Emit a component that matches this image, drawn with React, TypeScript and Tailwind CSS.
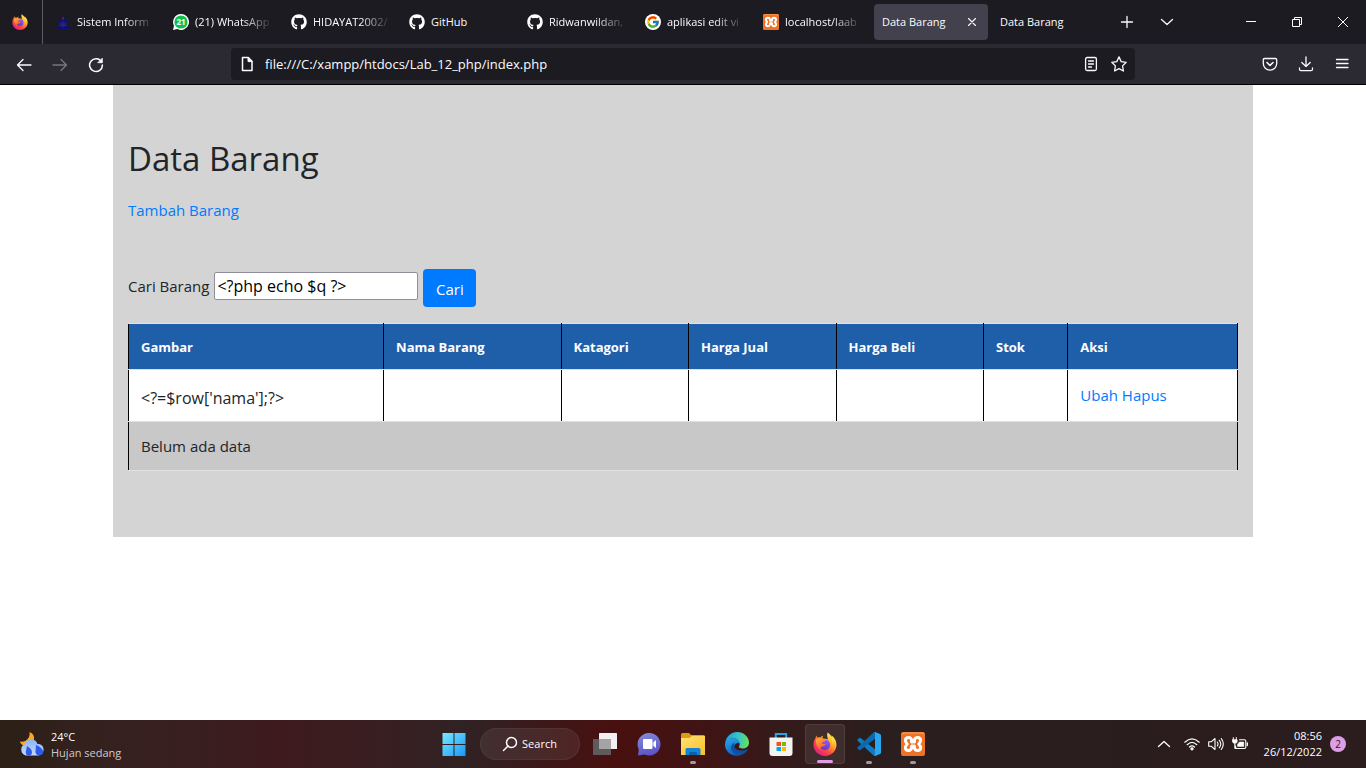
import { useId, type ReactNode } from "react";
import { FaGithub } from "react-icons/fa";
import { FcGoogle } from "react-icons/fc";

function FirefoxIcon({ className }: { className: string }) {
  const id = useId();
  return (
    <svg viewBox="0 0 24 24" className={className} aria-hidden="true">
      <defs>
        <linearGradient id={id + "a"} x1="0.85" y1="0.1" x2="0.2" y2="0.95">
          <stop offset="0" stopColor="#fff44f" />
          <stop offset="0.35" stopColor="#ffa52b" />
          <stop offset="0.65" stopColor="#ff4b3e" />
          <stop offset="1" stopColor="#e5178b" />
        </linearGradient>
        <linearGradient id={id + "b"} x1="0.6" y1="0" x2="0.3" y2="1">
          <stop offset="0" stopColor="#9059ff" />
          <stop offset="1" stopColor="#5b3bc4" />
        </linearGradient>
        <linearGradient id={id + "c"} x1="0" y1="0" x2="0.6" y2="1">
          <stop offset="0" stopColor="#ffb22e" />
          <stop offset="1" stopColor="#ff5a34" />
        </linearGradient>
      </defs>
      <path
        fill={`url(#${id}a)`}
        d="M14.6.4c2 1.300 3.300 2.900 4 4.700.1-.7.100-1.300-.1-1.900 3.100 2.300 5 5.800 5 9.600C23.500 19 18.400 24 12 24S.5 19 .5 12.800c0-2.500.7-4.800 2-6.700.1-.9.500-1.900 1.100-2.600.1.900.4 1.500.8 2 1-.3 2-.3 3 0 .7-.9 1.700-1.500 2.800-1.700-.6.800-.9 1.600-.9 2.400l5.700 1c-.8-2.200-1.300-4.600-.4-6.800Z"
      />
      <circle cx="12" cy="12.800" r="5.200" fill={`url(#${id}b)`} />
      <path
        fill={`url(#${id}c)`}
        d="M3 7.400c1.400-1.200 3-1.500 4.600-.9 1.500.8 3.200 1 5.200.9.5 1-.5 1.900-2.600 2.500-.9.300-.6 1.200-1.700 1.900 1.900-.3 3 .3 4.500.1-.8 1.900-2.500 2-3.900 2.500-2 .8-2.300 2.300-1.300 3.500C4.800 17.600 2.300 11 3 7.400Z"
      />
      <path
        fill="#ffd83d"
        d="M14.800 1.400c2.800 2.200 3.800 4.800 4.100 7 1 1.700 1 3.700.3 5.700 1.800-3.100 1.500-6.500-.6-9-.8-1.500-2.100-2.800-3.800-3.700Z"
      />
    </svg>
  );
}

function XamppIcon({ className }: { className: string }) {
  return (
    <svg viewBox="0 0 24 24" className={className} aria-hidden="true">
      <rect width="24" height="24" rx="2" fill="#ee7326" />
      <path d="M1 2.500Q1 1 3 1h18q2 0 2 1.500" stroke="#f9a66c" fill="none" />
      <path
        fill="none"
        stroke="#fff"
        strokeWidth="3"
        strokeLinejoin="round"
        d="M7.600 5.500c-1.900 0-3.200 1.200-3.200 3 0 1.500 1 2.500 1.800 3.500-.8 1-1.800 2-1.800 3.500 0 1.800 1.300 3 3.200 3 1.800 0 2.600-1 3-2.600V14h2.800v1.900c.4 1.600 1.200 2.600 3 2.600 1.900 0 3.200-1.200 3.200-3 0-1.500-1-2.500-1.800-3.500.8-1 1.800-2 1.800-3.500 0-1.800-1.300-3-3.200-3-1.800 0-2.600 1-3 2.600V10h-2.800V8.100c-.4-1.600-1.200-2.600-3-2.600Z"
      />
    </svg>
  );
}

function CampusIcon() {
  return (
    <svg viewBox="0 0 16 16" className="size-4 shrink-0" aria-hidden="true">
      <path d="M3 3.500Q8-1 13 3.500l1 6H2Z" fill="#17173a" />
      <path d="M1.500 11h13l-.5 4H2ZM5 6l2-1h2l2 1-.5 4h-5Z" fill="#11106e" />
      <path d="M4 11.500h8M8 7v7M4.500 8.500l7 3M11.500 8.500l-7 3" stroke="#24249a" />
      <path d="M7.300 5.500Q6.800 4 8.200 2.500q1.200 1.700.3 3Z" fill="#a51e2a" />
    </svg>
  );
}

function WhatsAppIcon() {
  return (
    <svg viewBox="0 0 16 16" className="size-4 shrink-0" aria-hidden="true">
      <path d="M8 0a8 8 0 1 1-3.700 15.100L0 16l1-4.200A8 8 0 0 1 8 0Z" fill="#fff" />
      <circle cx="8" cy="8" r="6.600" fill="#12bf4c" />
      <text x="8" y="10.800" textAnchor="middle" fontSize="8" fontWeight="700" fill="#fff">
        21
      </text>
    </svg>
  );
}

function EdgeIcon() {
  return (
    <svg viewBox="0 0 24 24" className="size-6" aria-hidden="true">
      <defs>
        <linearGradient id="edge-top" x1="0" y1="0.4" x2="1" y2="0.5">
          <stop offset="0" stopColor="#1c9de0" />
          <stop offset="0.5" stopColor="#35c1cf" />
          <stop offset="1" stopColor="#66e05c" />
        </linearGradient>
        <linearGradient id="edge-side" x1="0" y1="0" x2="0.4" y2="1">
          <stop offset="0" stopColor="#2ba9ea" />
          <stop offset="1" stopColor="#0a62c4" />
        </linearGradient>
      </defs>
      <path
        fill="url(#edge-side)"
        d="M0 12.500C0 8 4.500 6 9 6.300c4 .3 6.500 3 6.300 5.700-2-2-6-.5-6.200 3-.1 4 3.500 7 7.400 7.800C9 26-.1 21 0 12.500Z"
      />
      <path
        fill="#124f9f"
        d="M9.300 10.700C6 12 5.200 16 7 19c2 3.600 6.500 5.200 10.500 3.500 2.400-1 4-2.500 5.200-4.400.3-.6-.2-1-.8-.7C17 19.800 9.700 18.500 9.100 14c-.2-1.400 0-2.500.2-3.300Z"
      />
      <path
        fill="url(#edge-top)"
        d="M.2 10.500C1.300 4.300 6.300 0 12 0c6.800 0 12 4.900 12 10.400 0 4-3 6-6.500 6-2.700 0-4.100-.9-3.500-1.900C16.300 10.900 13.500 6.300 8.600 6.200 4.900 6.200 1.500 8 .2 10.500Z"
      />
    </svg>
  );
}

function VsCodeIcon() {
  return (
    <svg viewBox="0 0 24 24" className="size-6" aria-hidden="true">
      <path d="M.6 7.400 2.200 6q.6-.5 1.300 0L19 18v5.800q-1.300.300-2.400-.4L.6 8.800q-.6-.7 0-1.400Z" fill="#0f7cc4" />
      <path d="M.6 16.600 2.200 18q.6.500 1.300 0L19 6V.2q-1.300-.3-2.400.4L.6 15.200q-.6.700 0 1.400Z" fill="#0a69af" />
      <path d="M17 23.700q1 .300 1.800 0L23 22q1-.5 1-1.500V3.500Q24 2.500 23 2L18.800.2Q18 0 17 .4q1 .3 1 1.600v20q0 1.300-1 1.700Z" fill="#28a6f0" />
    </svg>
  );
}

function WindowsIcon() {
  return (
    <svg viewBox="0 0 24 24" className="size-6" aria-hidden="true">
      <defs>
        <linearGradient id="win" x1="0" y1="0" x2="24" y2="24" gradientUnits="userSpaceOnUse">
          <stop offset="0" stopColor="#7cecff" />
          <stop offset="1" stopColor="#1597fb" />
        </linearGradient>
      </defs>
      <path d="M.5 1h11v11H.5ZM12.500 1h11v11h-11ZM.5 13h11v11H.5ZM12.500 13h11v11h-11Z" fill="url(#win)" />
    </svg>
  );
}

function TaskViewIcon() {
  return (
    <svg viewBox="0 0 24 24" className="size-6" aria-hidden="true">
      <rect x="6" y="1" width="18" height="16" rx="0.500" fill="#f1f1f1" />
      <rect x="0" y="7" width="18" height="16" rx="0.500" fill="#5d5b5b" />
      <rect x="6" y="7" width="12" height="10" fill="#a4a4a4" />
    </svg>
  );
}

function ChatIcon() {
  return (
    <svg viewBox="0 0 24 24" className="size-6" aria-hidden="true">
      <defs>
        <linearGradient id="chat" x1="0.300" y1="0" x2="0.600" y2="1">
          <stop offset="0" stopColor="#7f8ad6" />
          <stop offset="1" stopColor="#5b50c9" />
        </linearGradient>
      </defs>
      <path d="M12 1a11.300 11.300 0 1 1-4.500 21.600L1 23.500l.8-6A11.300 11.300 0 0 1 12 1Z" fill="url(#chat)" />
      <rect x="6" y="7" width="9.500" height="10" rx="1" fill="#fff" />
      <path d="m16.300 10.300 2.700-2.300v8l-2.700-2.300Z" fill="#fff" />
    </svg>
  );
}

function ExplorerIcon() {
  return (
    <svg viewBox="0 0 24 24" className="size-6" aria-hidden="true">
      <defs>
        <linearGradient id="folder" x1="0" y1="0" x2="1" y2="1">
          <stop offset="0" stopColor="#ffe173" />
          <stop offset="1" stopColor="#fabf2a" />
        </linearGradient>
      </defs>
      <path d="M0 2.500Q0 1 1.500 1H8l2 2h12.500Q24 3 24 4.500V9H0Z" fill="#dc9b10" />
      <path d="M0 6h8.500L11 4h13v19H0Z" fill="url(#folder)" />
      <path d="M4.500 23v-5.500Q4.500 16 6 16h12q1.500 0 1.500 1.500V23Z" fill="#1583d3" />
      <path d="M8 23v-2q0-1 1-1h6q1 0 1 1v2Z" fill="#0c60a8" />
    </svg>
  );
}

function StoreIcon() {
  return (
    <svg viewBox="0 0 24 24" className="size-6" aria-hidden="true">
      <path d="M6.800 7V2h10.400v5" stroke="#27a6e5" strokeWidth="2" fill="none" />
      <path d="M.5 5.500h23V21q0 3-3 3h-17q-3 0-3-3Z" fill="#f3f3f3" />
      <path d="M7.500 10H12v4H7.500Z" fill="#f25022" />
      <path d="M13 10h4v4h-4Z" fill="#7fba00" />
      <path d="M7.500 15H12v4H7.500Z" fill="#00a4ef" />
      <path d="M13 15h4v4h-4Z" fill="#ffb900" />
    </svg>
  );
}

function WeatherIcon() {
  return (
    <svg viewBox="0 0 24 24" className="size-6" aria-hidden="true">
      <defs>
        <linearGradient id="cloud" x1="0" y1="0" x2="0" y2="1">
          <stop offset="0" stopColor="#89b4f5" />
          <stop offset="1" stopColor="#c5dbfa" />
        </linearGradient>
      </defs>
      <path d="M9.500 0c4 1.500 5.500 5 4 9L5 14C2 13 .5 11.500 0 9.500 6 10.500 10.500 6 9.500 0Z" fill="#f9a825" />
      <path d="M6 23.500a6 6 0 0 1-.8-11.500C6 5.800 16 5.600 17.500 12c8-.5 8 11 .5 11.500Z" fill="url(#cloud)" />
      <path d="M7 14c5 3 6 6 4 9-4 2-6-1-5-4Zm9-1c6 2.500 8.500 6 6.500 9-4 3-7.500.5-7-3Z" fill="#2e5be8" />
    </svg>
  );
}

function Line({ children }: { children: ReactNode }) {
  return (
    <svg
      viewBox="0 0 16 16"
      className="size-4"
      fill="none"
      stroke="currentColor"
      strokeWidth="1.300"
      strokeLinecap="round"
      strokeLinejoin="round"
      aria-hidden="true"
    >
      {children}
    </svg>
  );
}

const github = <FaGithub className="size-4 shrink-0 text-white" />;

const tabs: { title: string; icon?: ReactNode; active?: boolean }[] = [
  { title: "Sistem Inform", icon: <CampusIcon /> },
  { title: "(21) WhatsApp", icon: <WhatsAppIcon /> },
  { title: "HIDAYAT2002/", icon: github },
  { title: "GitHub", icon: github },
  { title: "Ridwanwildan,", icon: github },
  { title: "aplikasi edit vi", icon: <FcGoogle className="size-4 shrink-0 rounded-full bg-white p-px" /> },
  { title: "localhost/laab", icon: <XamppIcon className="size-4 shrink-0" /> },
  { title: "Data Barang", active: true },
  { title: "Data Barang" },
];

function TabStrip() {
  return (
    <div className="flex h-11 bg-[#1c1b22] text-[#fbfbfe]">
      <button aria-label="Firefox View" className="grid w-[43px] shrink-0 place-items-center border-r border-[#5b5b62] pr-0.5">
        <FirefoxIcon className="size-4" />
      </button>
      <div className="ml-[5px] flex min-w-0 items-center gap-1">
        {tabs.map((tab, i) => (
          <div
            key={i}
            className={
              "flex h-9 w-[114px] min-w-0 items-center gap-1.5 rounded " +
              (tab.active ? "bg-[#42414d] px-2" : tab.icon ? "px-[7px]" : "px-2")
            }
          >
            {tab.icon}
            <button
              className={
                "min-w-0 flex-1 text-left text-[11px] whitespace-nowrap " +
                (tab.icon && tab.title !== "GitHub"
                  ? "[mask-image:linear-gradient(to_right,black_60%,transparent)]"
                  : "")
              }
            >
              {tab.title}
            </button>
            {tab.active && (
              <button aria-label="Close tab">
                <Line>
                  <path d="m4.500 4.500 7 7M11.500 4.500l-7 7" strokeWidth="1.100" />
                </Line>
              </button>
            )}
          </div>
        ))}
      </div>
      <button aria-label="New tab" className="ml-[5px] grid w-8 place-items-center">
        <Line>
          <path d="M8 2.500v11M2.500 8h11" />
        </Line>
      </button>
      <button aria-label="List all tabs" className="ml-2 grid w-8 place-items-center">
        <Line>
          <path d="m2.500 5.500 5.500 5 5.500-5" />
        </Line>
      </button>
      <div className="ml-auto flex">
        <button aria-label="Minimize" className="grid w-[46px] place-items-center">
          <svg viewBox="0 0 10 10" className="size-2.5" stroke="#fff" fill="none">
            <path d="M0 4.500h10" />
          </svg>
        </button>
        <button aria-label="Restore" className="grid w-[46px] place-items-center">
          <svg viewBox="0 0 10 10" className="size-2.5" stroke="#fff" fill="none">
            <path d="M.5 2.500h7v7h-7ZM2.500 2.500v-2h7v7h-2" />
          </svg>
        </button>
        <button aria-label="Close" className="grid w-[46px] place-items-center">
          <svg viewBox="0 0 10 10" className="size-2.5" stroke="#fff" fill="none">
            <path d="m0 0 10 10M10 0 0 10" />
          </svg>
        </button>
      </div>
    </div>
  );
}

function NavBar() {
  return (
    <div className="flex h-[41px] items-start border-b border-black bg-[#2b2a33] pt-1 text-[#fbfbfe]">
      <div className="flex h-8 min-w-0 flex-1 items-center gap-5 pt-0.5 pl-4">
        <button aria-label="Back">
          <Line>
            <path d="M15 8H1.500M7 2.500 1.500 8 7 13.500" />
          </Line>
        </button>
        <button aria-label="Forward" className="text-[#77767d]">
          <Line>
            <path d="M1 8h13.500M9 2.500 14.500 8 9 13.500" />
          </Line>
        </button>
        <button aria-label="Reload">
          <Line>
            <path d="M13.600 5A6.400 6.400 0 1 0 14.400 8" strokeWidth="1.500" />
            <path d="M14.300 1.500v4.200h-4.200Z" fill="currentColor" strokeWidth="0.800" />
          </Line>
        </button>
      </div>
      <div className="flex h-8 w-[904px] items-center rounded bg-[#1c1b22] px-2">
        <Line>
          <path d="M3.500 1.600h5.800l3.700 3.700v9.100H3.500Z" strokeWidth="1.500" />
          <path d="M9 1.600v4h4Z" fill="currentColor" strokeWidth="1" />
        </Line>
        <input
          aria-label="Address"
          defaultValue="file:///C:/xampp/htdocs/Lab_12_php/index.php"
          className="ml-2.5 min-w-0 flex-1 bg-transparent pt-0.5 text-[13px] outline-none"
        />
        <button aria-label="Reader view" className="mr-3">
          <Line>
            <rect x="2.600" y="1.500" width="10.800" height="13" rx="1.500" />
            <path d="M5.500 5h5M5.500 8h5M5.500 11h3" />
          </Line>
        </button>
        <button aria-label="Bookmark this page">
          <Line>
            <path d="m8 .9 2.200 4.700 5 .7-3.600 3.600.8 5.100L8 12.600 3.600 15l.8-5.100L.8 6.300l5-.7Z" />
          </Line>
        </button>
      </div>
      <div className="flex h-8 min-w-0 flex-1 items-center justify-end gap-5 pr-4">
        <button aria-label="Save to Pocket">
          <Line>
            <path d="M2.500 2.500h11q1.200 0 1.200 1.200V7.500a6.700 6.700 0 0 1-13.400 0V3.700q0-1.200 1.200-1.200Z" />
            <path d="m5 6.500 3 3 3-3" strokeWidth="1.600" />
          </Line>
        </button>
        <button aria-label="Downloads">
          <Line>
            <path d="M8 .8V10.500M3.800 6.500 8 10.500l4.200-4M1.500 12v1.200q0 1.500 1.500 1.500h10q1.500 0 1.500-1.500V12" />
          </Line>
        </button>
        <button aria-label="Menu">
          <Line>
            <path d="M2.500 3.500h11.500M2.500 7.500h11.500M2.500 11.500h11.500" />
          </Line>
        </button>
      </div>
    </div>
  );
}

const columns = [
  { label: "Gambar", width: "w-[23%]" },
  { label: "Nama Barang", width: "w-[16%]" },
  { label: "Katagori", width: "w-[11.5%]" },
  { label: "Harga Jual", width: "w-[13.3%]" },
  { label: "Harga Beli", width: "w-[13.3%]" },
  { label: "Stok", width: "w-[7.6%]" },
  { label: "Aksi", width: "w-[15.3%]" },
];

const cell = "border-x border-y border-x-black border-y-[#dee2e6] px-3 text-left";

function Page() {
  return (
    <main className="flex-1 bg-white text-[15px] text-[#212529]">
      <div className="mx-auto max-w-[1140px] bg-[#d4d4d4] px-[15px] pt-[52px] pb-[66px]">
        <h1 className="text-[33px] leading-[43px]">Data Barang</h1>
        <p className="mt-[18px] leading-6">
          <a href="#tambah" className="text-[#007bff]">
            Tambah Barang
          </a>
        </p>
        <form className="mt-[47px] flex items-start" onSubmit={(e) => e.preventDefault()}>
          <label htmlFor="q" className="mt-[5px] leading-6">
            Cari Barang
          </label>
          <input
            id="q"
            type="text"
            defaultValue="<?php echo $q ?>"
            className="mt-[3px] ml-[5px] h-7 w-[204px] rounded-xs border border-[#8f8f9d] bg-white px-0.5 text-base text-black"
          />
          <button type="submit" className="ml-[5px] h-[38px] w-[53px] rounded bg-[#007bff] pt-0.5 text-white">
            Cari
          </button>
        </form>
        <table className="mt-4 w-full table-fixed border-collapse">
          <thead>
            <tr className="h-[46px] bg-[#1f5faa] text-[13px] text-white">
              {columns.map((c) => (
                <th key={c.label} className={cell + " pt-0.5 font-bold " + c.width}>
                  {c.label}
                </th>
              ))}
            </tr>
          </thead>
          <tbody>
            <tr className="h-[52px] bg-white">
              <td className={cell + " pt-1 text-base"}>{"<?=$row['nama'];?>"}</td>
              <td className={cell} />
              <td className={cell} />
              <td className={cell} />
              <td className={cell} />
              <td className={cell} />
              <td className={cell + " text-[#007bff]"}>
                <a href="#ubah">Ubah</a> <a href="#hapus">Hapus</a>
              </td>
            </tr>
            <tr className="h-[49px] bg-[#c8c8c8]">
              <td colSpan={7} className={cell}>
                Belum ada data
              </td>
            </tr>
          </tbody>
        </table>
      </div>
    </main>
  );
}

const apps: { name: string; icon: ReactNode; running?: boolean; active?: boolean }[] = [
  { name: "Task View", icon: <TaskViewIcon /> },
  { name: "Chat", icon: <ChatIcon /> },
  { name: "File Explorer", icon: <ExplorerIcon />, running: true },
  { name: "Microsoft Edge", icon: <EdgeIcon /> },
  { name: "Microsoft Store", icon: <StoreIcon /> },
  { name: "Firefox", icon: <FirefoxIcon className="size-6" />, active: true },
  { name: "Visual Studio Code", icon: <VsCodeIcon />, running: true },
  { name: "XAMPP", icon: <XamppIcon className="size-6" />, running: true },
];

function Taskbar() {
  return (
    <footer className="grid h-12 grid-cols-[1fr_auto_1fr] items-center bg-[linear-gradient(to_right,#2c2017_0%,#35211f_8%,#3a1e1f_15%,#3e1a1d_20%,#371f21_29%,#302224_34%,#48100f_45%,#411314_51%,#351a1a_57%,#2a1e1e_65%,#2b1c1d_100%)] text-[11px] text-white">
      <button className="flex items-center gap-[7px] pl-5 text-left leading-4">
        <WeatherIcon />
        <span className="pt-0.5">
          24°C
          <br />
          <span className="text-[#cfc9c9]">Hujan sedang</span>
        </span>
      </button>
      <div className="flex items-center gap-1">
        <button aria-label="Start" className="grid size-10 place-items-center">
          <WindowsIcon />
        </button>
        <button className="mx-px ml-0.5 flex h-8 w-[100px] items-center justify-center gap-1 rounded-full border border-white/5 bg-white/7">
          <svg viewBox="0 0 16 16" className="size-4" fill="none" stroke="#fff" strokeWidth="1.500" aria-hidden="true">
            <circle cx="9.500" cy="6.500" r="5" />
            <path d="m6 10-4.500 4.500" strokeLinecap="round" />
          </svg>
          Search
        </button>
        {apps.map((app) => (
          <button
            key={app.name}
            aria-label={app.name}
            className={
              "relative grid size-10 place-items-center rounded " +
              (app.active ? "border border-white/8 bg-white/8" : "")
            }
          >
            {app.icon}
            {app.running && (
              <span className="absolute bottom-0 left-1/2 h-[3px] w-1.5 -translate-x-1/2 rounded-full bg-[#a09a9b]" />
            )}
            {app.active && (
              <span className="absolute bottom-0 left-1/2 h-[3px] w-4 -translate-x-1/2 rounded-full bg-[#dd9ee6]" />
            )}
          </button>
        ))}
      </div>
      <div className="flex items-center justify-end pr-5">
        <button aria-label="Show hidden icons" className="mr-3">
          <Line>
            <path d="m2.500 10.500 5.500-5 5.500 5" />
          </Line>
        </button>
        <button aria-label="Network, volume and battery" className="flex items-center gap-2">
          <Line>
            <path d="M.8 6.200Q8-.6 15.200 6.200M3.200 8.700Q8 4 12.800 8.700M5.500 11Q8 8.700 10.500 11" strokeWidth="1.200" />
            <circle cx="8" cy="12.800" r="1" fill="currentColor" />
          </Line>
          <Line>
            <path d="M.7 5.800h2.500L7 2.500v11l-3.800-3.300H.7ZM9.300 6q1.500 2 0 4M11.300 4.300q3 3.700 0 7.400M13.300 2.600q4 5.400 0 10.800" strokeWidth="1.100" />
          </Line>
          <Line>
            <path d="M1.300 1.500v2M4.300 1.500v2M.5 3.800h4.600v1.500q0 2-2.300 2-2.300 0-2.300-2ZM2.800 7.500V12.500h2" fill="currentColor" strokeWidth="0.900" />
            <path d="M7.500 3.800h5q1.300 0 1.300 1.200v6.300q0 1.200-1.300 1.200H5" strokeWidth="1.100" />
            <path d="M7.500 6h4.300v4.500H5.500V8.500Z" fill="currentColor" strokeWidth="0.500" />
            <path d="M15.300 7v2.500" />
          </Line>
        </button>
        <button className="ml-4 text-right leading-4">
          08:56
          <br />
          26/12/2022
        </button>
        <button
          aria-label="2 notifications"
          className="ml-2 grid size-4 place-items-center rounded-full bg-[#dd9ee6] text-[10px] text-[#2b1c1d]"
        >
          2
        </button>
      </div>
    </footer>
  );
}

export default function App() {
  return (
    <div className="flex min-h-screen flex-col font-['Open_Sans','Noto_Sans',sans-serif]">
      <header>
        <TabStrip />
        <NavBar />
      </header>
      <Page />
      <Taskbar />
    </div>
  );
}
